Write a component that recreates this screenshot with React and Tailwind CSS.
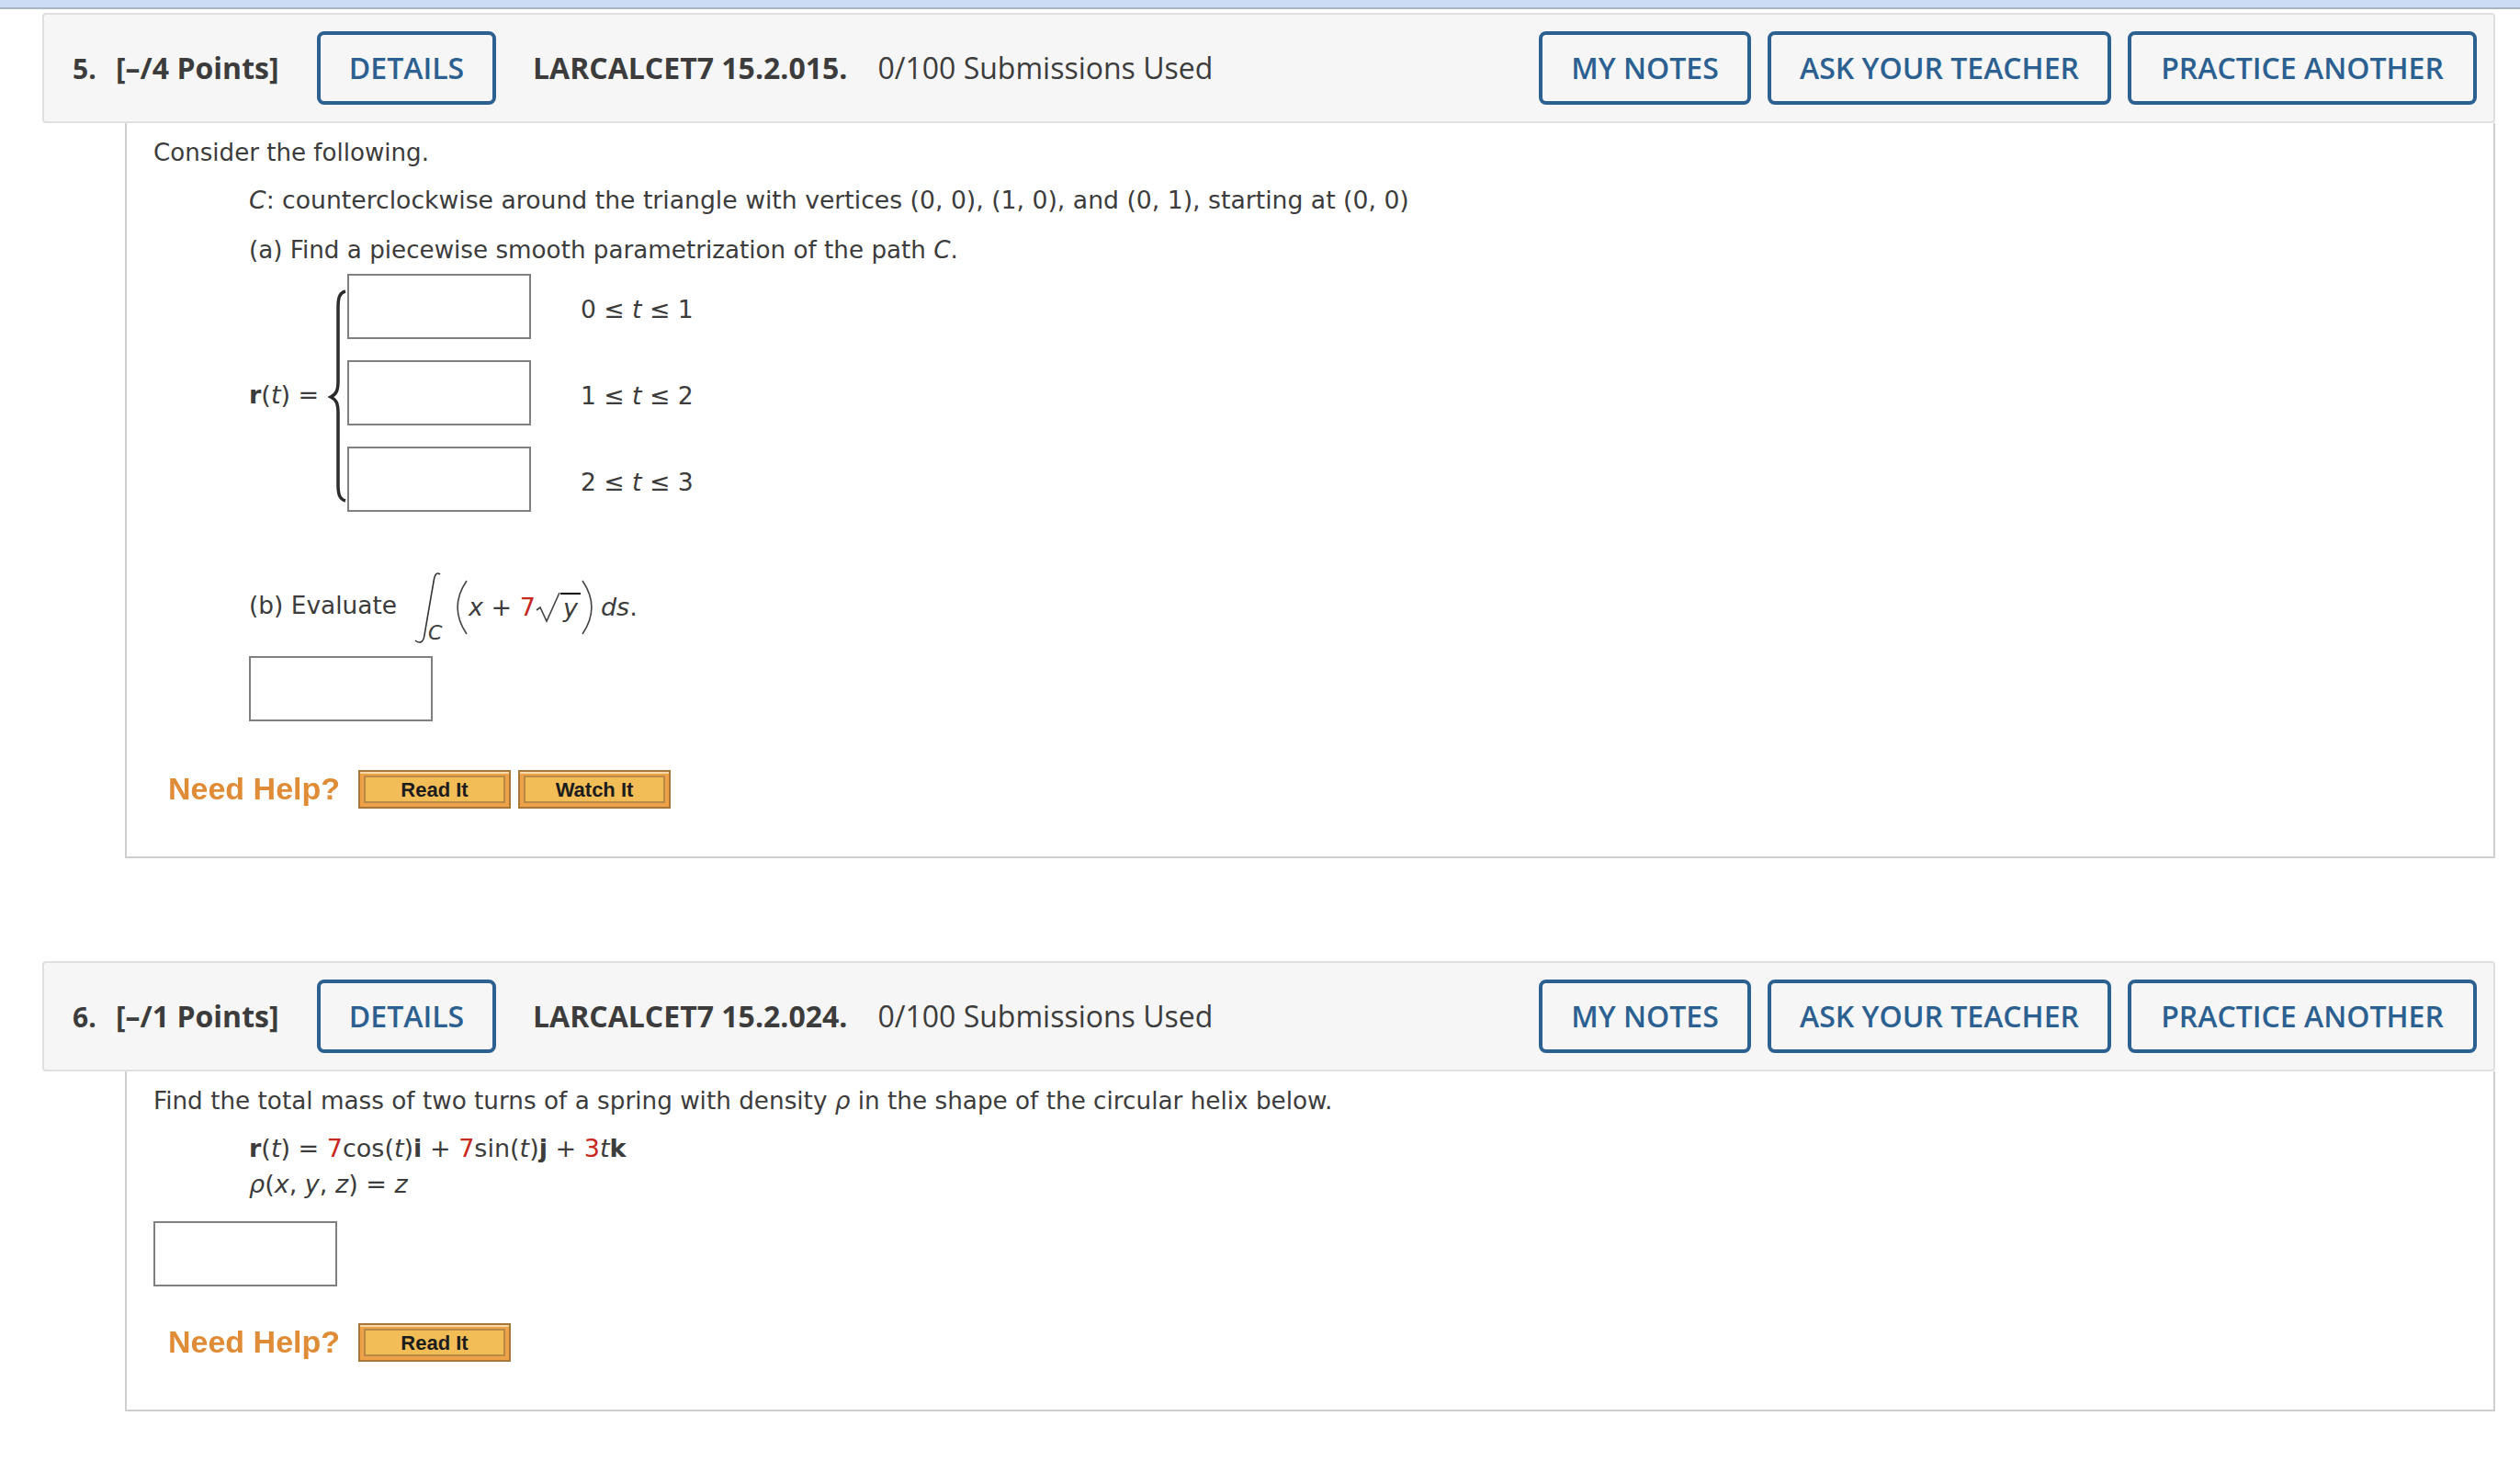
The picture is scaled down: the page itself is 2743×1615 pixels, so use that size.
import React from 'react'

const Input = ({ className = '' }) => (
    <div className={`w-[200px] h-[71px] bg-white border-2 border-[#808080] ${className}`}></div>
)

const Red = ({ children }) => <span className="text-[#c8281e]">{children}</span>

const HeaderButton = ({ children, className = '' }) => (
    <button className={`h-20 border-4 border-[#2b6090] rounded-lg text-[#2b6090] text-[32px] font-semibold flex items-center justify-center ${className}`}>
        {children}
    </button>
)

const Header = ({ numero, puntos, codigo }) => (
    <div className="h-[120px] ml-[46px] mr-[27px] pl-[31px] pr-[18px] flex items-center bg-[#f6f6f6] border-2 border-[#dfdfdf] rounded font-['Open_Sans',sans-serif] text-[#3c3c3c]">
        <span className="w-[47px] text-[30px] font-bold">{numero}</span>
        <span className="w-[219px] text-[32px] font-bold whitespace-nowrap">[–/{puntos} Points]</span>
        <HeaderButton className="w-[195px]">DETAILS</HeaderButton>
        <span className="ml-10 text-[32px] font-bold whitespace-nowrap">{codigo}</span>
        <span className="ml-[33px] text-[32px] whitespace-nowrap">0/100 Submissions Used</span>
        <div className="ml-auto flex gap-[18px]">
            <HeaderButton className="w-[231px]">MY NOTES</HeaderButton>
            <HeaderButton className="w-[374px]">ASK YOUR TEACHER</HeaderButton>
            <HeaderButton className="w-[380px]">PRACTICE ANOTHER</HeaderButton>
        </div>
    </div>
)

const HelpButton = ({ children }) => (
    <div className="w-[166px] h-[42px] p-1 bg-[#eda24a] border-2 border-[#a9763a] shadow-[inset_0_2px_0_#f6d9a8]">
        <div className="h-full pt-[2px] flex items-center justify-center bg-[#f2bd57] border-2 border-[#b98a45] font-['Liberation_Sans',sans-serif] text-[22px] font-bold text-[#1c1c1c]">
            {children}
        </div>
    </div>
)

const NeedHelp = ({ botones, className = '' }) => (
    <div className={`ml-4 flex items-center ${className}`}>
        <span className="w-[207px] font-['Liberation_Sans',sans-serif] text-[34px] font-bold text-[#e08b35] blur-[0.6px] whitespace-nowrap">Need Help?</span>
        <div className="flex gap-[8px]">
            {botones.map(b => <HelpButton key={b}>{b}</HelpButton>)}
        </div>
    </div>
)

const Cuerpo = ({ children, className = '' }) => (
    <div className={`ml-[136px] mr-[27px] pl-[29px] border-l-2 border-r-2 border-b-2 border-[#cfcfcf] font-['DejaVu_Sans',sans-serif] text-[27px] text-[#3c3c3c] ${className}`}>
        {children}
    </div>
)

const Fila = ({ children }) => (
    <div className="flex items-center gap-[54px]">
        <Input />
        <span className="pt-[6px] text-[26.6px] whitespace-pre">{children}</span>
    </div>
)

const Llave = () => (
    <svg width="21" height="232" viewBox="0 0 21 232" className="shrink-0 mt-[7px]">
        <path d="M19 2 C12 4 11 10 11 20 L11 100 C11 110 9 114 3 117 C9 120 11 124 11 134 L11 212 C11 222 12 228 19 230" fill="none" stroke="#2c2c2c" strokeWidth="3.5" />
    </svg>
)

const Integral = () => (
    <div className="relative w-[30px] h-[78px] shrink-0 mt-[6px]">
        <svg width="30" height="78" viewBox="0 0 30 78">
            <path d="M29 2 C25 -1 23 3 22 10 L12 68 C11 76 7 78 2 74" fill="none" stroke="#333" strokeWidth="1.6" />
        </svg>
        <span className="absolute left-[16px] bottom-[-4px] text-[22px] italic">C</span>
    </div>
)

const Parentesis = ({ derecho }) => (
    <svg width="14" height="60" viewBox="0 0 14 60" className="shrink-0">
        <path d={derecho ? 'M2 1 C15 20 15 40 2 59' : 'M12 1 C-1 20 -1 40 12 59'} fill="none" stroke="#444" strokeWidth="1.6" />
    </svg>
)

const Raiz = () => (
    <svg width="27" height="34" viewBox="0 0 27 34" className="shrink-0">
        <path d="M1 20 L5 17 L12 32 L26 1" fill="none" stroke="#444" strokeWidth="1.6" />
    </svg>
)

const Pregunta5 = () => (
    <Cuerpo className="h-[800px]">
        <div className="pt-3 leading-10 text-[26.1px]">Consider the following.</div>
        <div className="ml-[104px] mt-3 leading-10 text-[26.67px] whitespace-nowrap"><i>C</i>: counterclockwise around the triangle with vertices (0, 0), (1, 0), and (0, 1), starting at (0, 0)</div>
        <div className="ml-[104px] mt-[14px] leading-10 text-[26.2px]">(a) Find a piecewise smooth parametrization of the path <i>C</i>.</div>

        <div className="ml-[104px] mt-[6px] flex items-center">
            <span className="w-[86px] pt-[6px] whitespace-nowrap"><b>r</b>(<i>t</i>) =</span>
            <Llave />
            <div className="flex flex-col gap-[23px]">
                <Fila>0 ≤ <i>t</i> ≤ 1</Fila>
                <Fila>1 ≤ <i>t</i> ≤ 2</Fila>
                <Fila>2 ≤ <i>t</i> ≤ 3</Fila>
            </div>
        </div>

        <div className="ml-[104px] mt-[62px] h-[80px] flex items-center whitespace-nowrap">
            <span className="w-[179px] text-[26.4px]">(b) Evaluate</span>
            <Integral />
            <div className="ml-[16px] mt-[4px] flex items-center">
                <Parentesis />
                <span><i>x</i> + <Red>7</Red></span>
                <Raiz />
                <span className="border-t-2 border-black leading-[30px] px-[3px]"><i>y</i></span>
                <Parentesis derecho />
                <span className="ml-[8px]"><i>ds</i>.</span>
            </div>
        </div>

        <Input className="ml-[104px] mt-[15px]" />
        <NeedHelp className="mt-[48px]" botones={['Read It', 'Watch It']} />
    </Cuerpo>
)

const Pregunta6 = () => (
    <Cuerpo className="h-[370px]">
        <div className="pt-3 leading-10 text-[26.25px] whitespace-nowrap">Find the total mass of two turns of a spring with density <i>ρ</i> in the shape of the circular helix below.</div>
        <div className="ml-[104px] mt-3 leading-10"><b>r</b>(<i>t</i>) = <Red>7</Red>cos(<i>t</i>)<b>i</b> + <Red>7</Red>sin(<i>t</i>)<b>j</b> + <Red>3</Red><i>t</i><b>k</b></div>
        <div className="ml-[104px] -mt-px leading-10"><i>ρ</i>(<i>x</i>, <i>y</i>, <i>z</i>) = <i>z</i></div>
        <Input className="mt-5" />
        <NeedHelp className="mt-[35px]" botones={['Read It']} />
    </Cuerpo>
)

const App = () => {
    return (
        <div className="min-h-[1615px] bg-white">
            <div className="h-[10px] bg-[#ccdcf4] border-b-2 border-[#a9b4c2]"></div>
            <div className="mt-1">
                <Header numero="5." puntos="4" codigo="LARCALCET7 15.2.015." />
                <Pregunta5 />
            </div>
            <div className="mt-[112px]">
                <Header numero="6." puntos="1" codigo="LARCALCET7 15.2.024." />
                <Pregunta6 />
            </div>
        </div>
    )
}

export default App
